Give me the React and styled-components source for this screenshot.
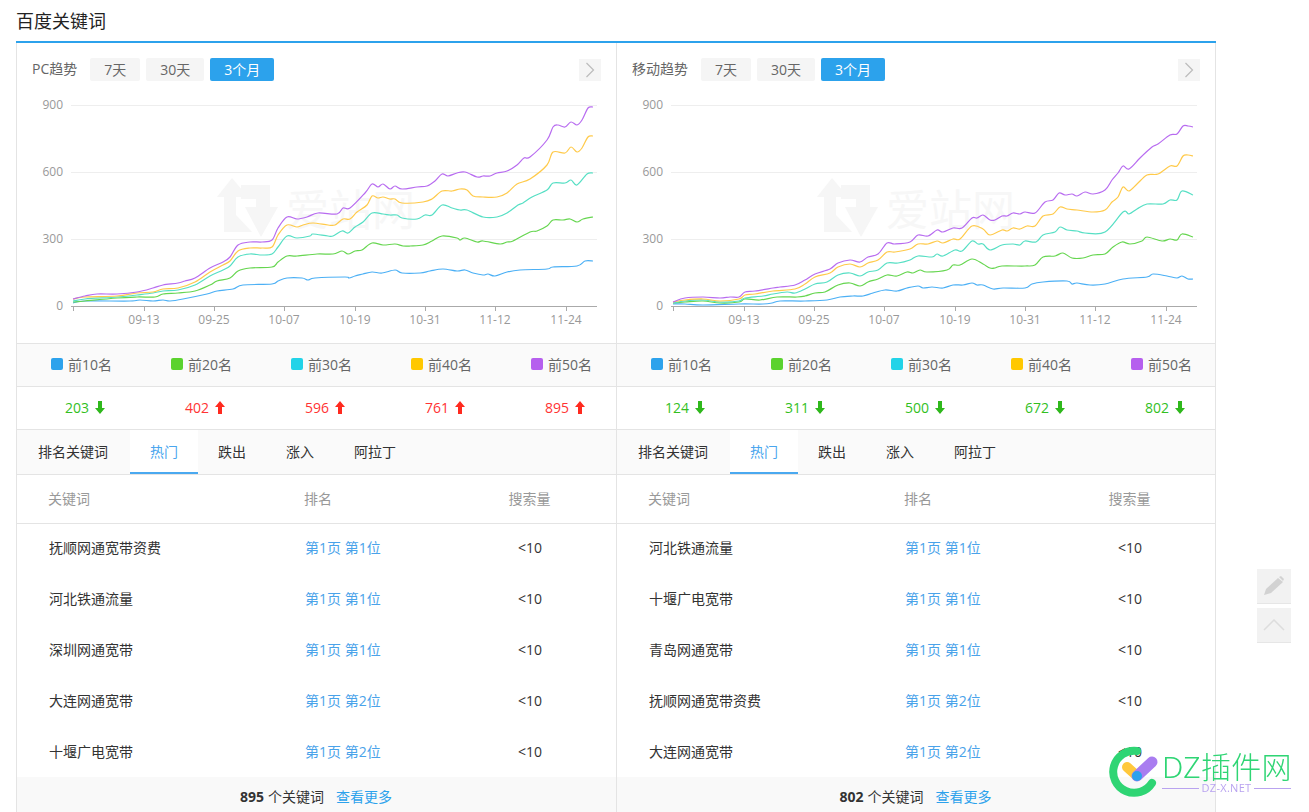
import React from 'react';
import styled, { createGlobalStyle } from 'styled-components';

const GlobalStyle = createGlobalStyle`
  html, body {
    margin: 0;
    height: 812px;
    overflow: hidden;
    background: #fff;
  }
  body {
    font-family: "Open Sans", "Noto Sans CJK SC", sans-serif;
    font-size: 14px;
    color: #333;
  }
  * { box-sizing: border-box; }
`;

const Page = styled.div`
  width: 1200px;
  margin-left: 16px;
`;
const Title = styled.h2`
  margin: 0;
  height: 43px;
  font-size: 18px;
  font-weight: 400;
  line-height: 43px;
  color: #222;
  border-bottom: 2px solid #2ca2ec;
`;
const Columns = styled.div`
  display: grid;
  grid-template-columns: 600px 600px;
`;
const Column = styled.section`
  border-left: 1px solid #e4e4e4;
  border-right: ${(p) => (p.$last ? '1px solid #e4e4e4' : 'none')};
`;
const Toolbar = styled.div`
  display: flex;
  align-items: center;
  height: 52px;
  padding: 15px 15px 14px 15px;
`;
const TrendName = styled.span`
  margin-right: 13px;
  margin-bottom: 2px;
  line-height: 23px;
  color: #666;
`;
const RangeButton = styled.span`
  height: 23px;
  margin-right: 6px;
  padding: 0 14px;
  line-height: 23px;
  border-radius: 2px;
  color: ${(p) => (p.$active ? '#fff' : '#666')};
  background: ${(p) => (p.$active ? '#2ca2ec' : '#f5f5f5')};
`;
const NextButton = styled.span`
  display: flex;
  align-items: center;
  justify-content: center;
  width: 22px;
  height: 22px;
  margin-left: auto;
  background: #f5f5f5;
`;
const ChartSvg = styled.svg`
  display: block;
  width: 598px;
  height: 248px;
`;
const AxisText = styled.text`
  font-size: 12px;
  fill: #999;
`;
const MarkText = styled.text`
  font-size: 43px;
  fill: #f7f7f7;
`;
const Legend = styled.div`
  display: grid;
  grid-template-columns: repeat(5, 120px);
  height: 44px;
  padding-bottom: 2px;
  background: #fafafa;
  border-top: 1px solid #e4e4e4;
  border-bottom: 1px solid #e4e4e4;
`;
const LegendItem = styled.div`
  display: flex;
  align-items: center;
  gap: 5px;
  padding-left: 34px;
  color: #666;
  white-space: nowrap;
`;
const Swatch = styled.i`
  width: 12px;
  height: 12px;
  border-radius: 2px;
  background: ${(p) => p.$color};
`;
const Stats = styled.div`
  display: grid;
  grid-template-columns: repeat(5, 120px);
  height: 43px;
  padding-left: 8px;
  padding-bottom: 1px;
  border-bottom: 1px solid #e4e4e4;
  overflow: hidden;
`;
const Stat = styled.div`
  display: flex;
  align-items: center;
  justify-content: center;
  gap: 6px;
  color: ${(p) => (p.$up ? '#ff3333' : '#33bf1f')};
`;
const Tabs = styled.div`
  display: flex;
  height: 45px;
  background: #fafafa;
  border-bottom: 1px solid #e4e4e4;
`;
const Tab = styled.span`
  height: 44px;
  padding: 0 20px;
  line-height: 44px;
  color: ${(p) => (p.$active ? '#4aa6ee' : '#333')};
  background: ${(p) => (p.$active ? '#fff' : 'transparent')};
  border-bottom: ${(p) => (p.$active ? '2px solid #4aa9f0' : 'none')};
  &:first-child {
    padding: 0 22px 0 21px;
  }
`;
const TableRow = styled.div`
  display: grid;
  grid-template-columns: 256px 170px 110px;
  align-items: center;
  height: 51px;
  padding-left: 32px;
  padding-bottom: 1px;
  &:first-child {
    height: 49px;
    padding-bottom: 3px;
  }
`;
const HeadRow = styled(TableRow)`
  grid-template-columns: 256px 170px 111px;
  height: 49px;
  padding-left: 31px;
  padding-bottom: 2px;
  color: #999;
  border-bottom: 1px solid #e4e4e4;
`;
const RankLink = styled.span`
  color: #4aa3ea;
`;
const Volume = styled.span`
  text-align: center;
`;
const Footer = styled.div`
  display: flex;
  align-items: center;
  justify-content: center;
  height: 40px;
  padding-bottom: 2px;
  padding-right: 1px;
  background: #f9f9f9;
`;
const Total = styled.b`
  margin-right: 4px;
  font-weight: 700;
`;
const MoreLink = styled.span`
  margin-left: 12px;
  color: #2ca2ec;
`;
const FloatTools = styled.div`
  position: fixed;
  top: 569px;
  left: 1257px;
  display: flex;
  flex-direction: column;
  gap: 4px;
`;
const FloatButton = styled.span`
  display: flex;
  align-items: center;
  justify-content: center;
  width: 34px;
  height: 35px;
  background: #f2f2f2;
  border-bottom: 1px solid #e6e6e6;
`;
const Badge = styled.div`
  position: fixed;
  top: 746px;
  left: 1108px;
  display: flex;
  gap: 2px;
  pointer-events: none;
`;
const BadgeText = styled.div`
  display: flex;
  flex-direction: column;
  width: 129px;
  padding-top: 6px;
`;
const BadgeName = styled.div`
  font-family: "Noto Sans", "Noto Sans CJK SC", sans-serif;
  font-size: 30px;
  font-weight: 300;
  letter-spacing: 0.3px;
  line-height: 30px;
  color: #2fd574;
  white-space: nowrap;
`;
const BadgeSub = styled.div`
  display: flex;
  align-items: center;
  gap: 3px;
  font-size: 11px;
  letter-spacing: 0.3px;
  line-height: 12px;
  color: #b9a3f0;
  &::before, &::after {
    content: "";
    flex: 1;
    height: 1px;
    background: #b9a3f0;
  }
`;

const LEVELS = [
  { name: '前10名', color: '#2ca2ec', line: '#4cb0f5' },
  { name: '前20名', color: '#5bd22e', line: '#66d650' },
  { name: '前30名', color: '#22d3e8', line: '#56dfc4' },
  { name: '前40名', color: '#ffc800', line: '#ffca4a' },
  { name: '前50名', color: '#b65fee', line: '#b86cf0' },
];
const TICKS = [
  [144, '09-13'], [214, '09-25'], [284, '10-07'], [355, '10-19'],
  [425, '10-31'], [495, '11-12'], [566, '11-24'],
];
const TABS = ['排名关键词', '热门', '跌出', '涨入', '阿拉丁'];

const PC_LINES = [
  [73,303,85,301,130,301,140,300,153,301,163,300,170,301,183,299,207,294,217,291,233,289,243,285,272,284,278,281,287,278,302,278,308,280,315,278,345,277,349,278,355,276,363,274,372,272,382,273,395,270,402,273,420,273,430,271,443,269,457,271,465,270,473,273,483,275,488,274,495,276,507,272,520,270,547,269,553,267,577,266,585,261,593,261],
  [73,302,85,301,117,298,137,297,155,297,163,294,178,293,195,291,210,285,217,281,230,278,238,271,250,268,272,267,278,262,287,256,297,256,317,254,333,254,342,251,348,254,355,251,362,250,372,243,383,245,395,244,403,246,410,246,423,245,432,241,442,236,457,238,460,240,465,238,477,242,483,241,500,244,507,242,513,241,530,232,537,231,547,226,553,220,563,220,570,219,577,222,583,219,593,217],
  [73,301,85,299,117,297,137,295,153,293,163,291,178,290,195,285,210,276,223,270,230,266,238,257,250,254,262,255,272,254,278,247,287,236,297,238,310,236,313,234,328,236,333,236,342,231,348,233,355,227,363,222,372,213,383,214,390,215,397,215,402,218,417,219,425,215,432,215,442,205,452,208,460,210,467,210,483,217,497,217,507,213,518,205,523,203,532,197,547,190,553,183,565,183,571,180,577,185,587,174,593,173],
  [73,299,85,297,117,296,137,293,153,292,163,289,178,288,195,282,210,272,223,265,230,261,238,251,250,248,262,248,272,247,278,235,287,225,297,227,303,225,313,223,328,225,335,225,343,219,350,219,357,212,367,205,372,196,378,198,383,197,390,199,395,199,402,203,423,202,432,199,442,191,452,191,460,189,467,190,473,196,483,197,497,197,507,193,517,184,530,179,547,165,553,152,565,153,571,147,577,152,582,148,588,137,593,136],
  [73,299,85,296,97,294,117,294,137,292,153,288,163,285,178,283,185,281,195,278,210,268,223,262,230,257,238,245,250,242,262,242,272,240,278,228,287,217,297,219,307,217,318,213,337,214,343,208,350,208,365,193,372,184,378,187,383,184,390,189,395,186,402,189,417,187,427,186,435,181,442,174,448,176,457,173,465,172,477,177,483,176,490,176,497,173,507,171,517,165,524,158,530,157,547,140,553,127,558,125,565,127,571,122,577,125,582,120,588,108,593,107],
];
const MOBILE_LINES = [
  [73,304,85,304,103,305,139,304,163,304,172,303,180,301,205,301,227,300,240,297,253,296,263,296,273,293,285,290,297,291,307,288,318,286,323,288,332,287,343,288,353,285,363,285,372,283,377,285,383,285,393,289,403,288,425,288,432,284,443,282,467,281,472,284,477,283,490,285,505,284,523,279,547,277,553,274,567,276,577,278,582,276,588,279,593,279],
  [73,303,85,302,103,301,120,303,139,302,145,299,160,300,177,297,197,297,205,296,215,293,225,292,238,285,250,283,260,286,268,282,278,279,287,275,297,276,307,272,313,273,320,270,327,272,347,270,353,265,360,265,372,259,383,264,390,268,395,268,402,266,425,266,435,265,443,257,455,256,463,253,472,258,483,258,493,255,505,254,513,247,522,242,530,244,542,241,547,237,562,241,570,239,577,240,582,234,593,237],
  [73,303,85,301,103,300,120,302,139,301,145,298,163,296,173,294,187,292,195,293,205,289,215,284,227,282,238,275,250,273,260,276,268,272,278,270,287,263,298,263,310,260,318,256,332,257,337,254,343,256,355,250,362,251,372,241,378,244,383,244,390,250,402,245,413,244,420,245,425,241,436,242,443,235,455,232,460,227,467,230,477,231,485,233,505,232,523,212,529,214,537,209,547,204,563,204,570,200,577,200,582,191,593,195],
  [73,302,85,300,103,299,120,301,139,299,145,295,155,294,173,291,195,289,205,284,215,277,230,273,238,267,250,264,260,267,268,263,278,260,287,252,295,252,310,249,318,244,328,244,337,241,343,243,353,239,360,239,372,226,383,229,390,235,402,230,407,231,413,228,420,229,427,226,435,226,443,216,453,214,460,207,467,209,477,210,493,212,505,210,512,202,518,197,523,187,529,191,537,184,547,175,558,174,570,166,577,166,583,156,588,155,593,156],
  [73,302,85,298,103,297,120,298,130,297,139,297,145,292,155,291,173,288,180,287,195,285,205,280,215,274,230,269,238,263,250,260,260,262,268,257,278,254,287,243,295,244,310,242,318,235,328,236,337,230,343,232,353,228,362,228,372,218,377,218,383,215,390,220,395,220,402,216,407,216,413,213,420,214,425,212,435,213,445,202,453,200,459,193,465,195,472,194,477,196,485,192,493,194,505,190,512,180,518,173,523,166,529,169,540,158,552,147,558,144,570,135,577,134,583,126,588,126,593,127],
];

const PANELS = [
  {
    name: 'PC趋势',
    lines: PC_LINES,
    stats: [[203, false], [402, true], [596, true], [761, true], [895, true]],
    rows: [
      ['抚顺网通宽带资费', '第1页 第1位'],
      ['河北铁通流量', '第1页 第1位'],
      ['深圳网通宽带', '第1页 第1位'],
      ['大连网通宽带', '第1页 第2位'],
      ['十堰广电宽带', '第1页 第2位'],
    ],
    total: 895,
  },
  {
    name: '移动趋势',
    lines: MOBILE_LINES,
    stats: [[124, false], [311, false], [500, false], [672, false], [802, false]],
    rows: [
      ['河北铁通流量', '第1页 第1位'],
      ['十堰广电宽带', '第1页 第1位'],
      ['青岛网通宽带', '第1页 第1位'],
      ['抚顺网通宽带资费', '第1页 第2位'],
      ['大连网通宽带', '第1页 第2位'],
    ],
    total: 802,
  },
];

// flat [x, y, x, y...] list to a smooth path
const toPath = (flat) => {
  const pts = [];
  for (let i = 0; i < flat.length; i += 2) pts.push([flat[i], flat[i + 1]]);
  let d = `M${pts[0][0]} ${pts[0][1]}`;
  for (let i = 0; i < pts.length - 1; i += 1) {
    const p0 = pts[i - 1] || pts[i];
    const p1 = pts[i];
    const p2 = pts[i + 1];
    const p3 = pts[i + 2] || p2;
    const c1x = p1[0] + (p2[0] - p0[0]) / 6;
    const c1y = p1[1] + (p2[1] - p0[1]) / 6;
    const c2x = p2[0] - (p3[0] - p1[0]) / 6;
    const c2y = p2[1] - (p3[1] - p1[1]) / 6;
    d += ` C${c1x.toFixed(1)} ${c1y.toFixed(1)} ${c2x.toFixed(1)} ${c2y.toFixed(1)} ${p2[0]} ${p2[1]}`;
  }
  return d;
};

const TrendChart = ({ lines }) => (
  <ChartSvg viewBox="17 95 598 248">
    <polygon points="232,178 248,197 236,197 236,215 252,232 224,232 224,197 217,197" fill="#f6f6f6" />
    <polygon points="241,185 270,185 270,207 278,207 261,237 245,207 256,207 256,199 241,199" fill="#f6f6f6" />
    <MarkText x="286" y="226">爱站网</MarkText>
    {[105, 172, 239].map((y) => (
      <line key={y} x1="71" x2="597" y1={y + 0.5} y2={y + 0.5} stroke="#eee" />
    ))}
    {[[900, 109], [600, 176], [300, 243], [0, 310]].map(([label, y]) => (
      <AxisText key={label} x="63" y={y} textAnchor="end">{label}</AxisText>
    ))}
    <line x1="71" x2="597" y1="306.5" y2="306.5" stroke="#aaa" />
    <line x1="73.5" x2="73.5" y1="306" y2="311" stroke="#aaa" />
    {TICKS.map(([x, label]) => (
      <g key={label}>
        <line x1={x + 0.5} x2={x + 0.5} y1="306" y2="311" stroke="#aaa" />
        <AxisText x={x} y="324" textAnchor="middle">{label}</AxisText>
      </g>
    ))}
    {lines.map((flat, i) => (
      <path key={LEVELS[i].name} d={toPath(flat)} fill="none" stroke={LEVELS[i].line} strokeWidth="1.2" />
    ))}
  </ChartSvg>
);

const StatArrow = ({ up }) => (
  <svg width="10" height="13" viewBox="0 0 10 13">
    <polygon
      points={up ? '5,0 10,6 7,6 7,13 3,13 3,6 0,6' : '5,13 10,7 7,7 7,0 3,0 3,7 0,7'}
      fill={up ? '#ff2a1f' : '#2fb81c'}
    />
  </svg>
);

const TrendPanel = ({ panel, last }) => (
  <Column $last={last}>
    <Toolbar>
      <TrendName>{panel.name}</TrendName>
      <RangeButton>7天</RangeButton>
      <RangeButton>30天</RangeButton>
      <RangeButton $active>3个月</RangeButton>
      <NextButton>
        <svg width="10" height="16" viewBox="0 0 10 16">
          <path d="M1.5 1 L8.5 8 L1.5 15" fill="none" stroke="#bbb" strokeWidth="1.2" />
        </svg>
      </NextButton>
    </Toolbar>
    <TrendChart lines={panel.lines} />
    <Legend>
      {LEVELS.map((level) => (
        <LegendItem key={level.name}>
          <Swatch $color={level.color} />
          {level.name}
        </LegendItem>
      ))}
    </Legend>
    <Stats>
      {panel.stats.map(([value, up], i) => (
        <Stat key={LEVELS[i].name} $up={up}>
          {value}
          <StatArrow up={up} />
        </Stat>
      ))}
    </Stats>
    <Tabs>
      {TABS.map((tab) => <Tab key={tab} $active={tab === '热门'}>{tab}</Tab>)}
    </Tabs>
    <HeadRow>
      <span>关键词</span>
      <span>排名</span>
      <Volume>搜索量</Volume>
    </HeadRow>
    <div>
      {panel.rows.map(([keyword, rank]) => (
        <TableRow key={keyword}>
          <span>{keyword}</span>
          <RankLink>{rank}</RankLink>
          <Volume>&lt;10</Volume>
        </TableRow>
      ))}
    </div>
    <Footer>
      <Total>{panel.total}</Total>
      个关键词
      <MoreLink>查看更多</MoreLink>
    </Footer>
  </Column>
);

const App = () => (
  <>
    <GlobalStyle />
    <Page>
      <Title>百度关键词</Title>
      <Columns>
        {PANELS.map((panel, i) => (
          <TrendPanel key={panel.name} panel={panel} last={i === 1} />
        ))}
      </Columns>
    </Page>
    <FloatTools>
      <FloatButton>
        <svg width="22" height="20" viewBox="0 0 22 20">
          <path d="M1 19 L3 13 L15 2 L20 6 L8 17 Z" fill="#d2d2d2" />
          <path d="M16 1 L18 0 L21 3 L20 5 Z" fill="#d2d2d2" />
        </svg>
      </FloatButton>
      <FloatButton>
        <svg width="22" height="12" viewBox="0 0 22 12">
          <path d="M1 11 L11 1 L21 11" fill="none" stroke="#ddd" strokeWidth="1.5" />
        </svg>
      </FloatButton>
    </FloatTools>
    <Badge>
      <svg width="52" height="52" viewBox="0 0 52 52">
        <path d="M29 5 A21 21 0 1 0 44 37" fill="none" stroke="#2fd574" strokeWidth="8" strokeLinecap="round" />
        <path d="M19 21 L29 30" stroke="#ffc83c" strokeWidth="10" strokeLinecap="round" />
        <path d="M29 30 L44 16" stroke="#a97df0" strokeWidth="11" strokeLinecap="round" />
        <circle cx="29" cy="30" r="5" fill="#2ca2ec" />
      </svg>
      <BadgeText>
        <BadgeName>DZ插件网</BadgeName>
        <BadgeSub>DZ-X.NET</BadgeSub>
      </BadgeText>
    </Badge>
  </>
);

export default App;
